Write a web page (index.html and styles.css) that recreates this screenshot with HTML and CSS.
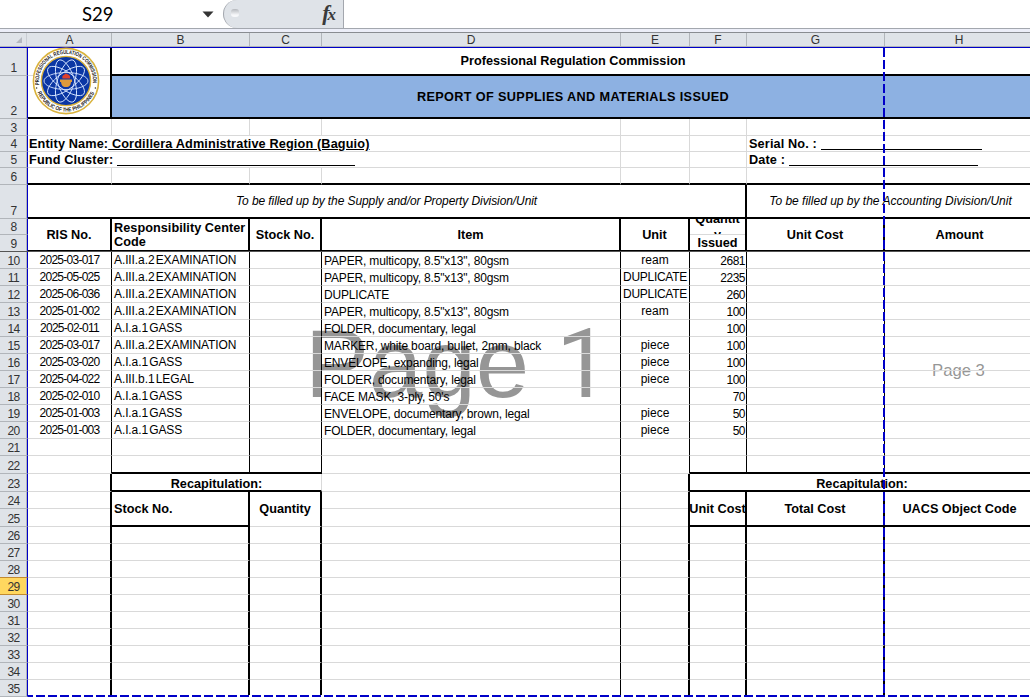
FILE: index.html
```
<!DOCTYPE html>
<html lang="en">
<head>
<meta charset="utf-8">
<title>Report of Supplies and Materials Issued</title>
<link rel="stylesheet" href="styles.css">
</head>
<body>
<div class="app">
  <div class="bar">
    <div class="namebox"><span>S29</span><svg class="caret" width="12" height="7" viewBox="0 0 12 7"><path d="M0.5 0.5h11L6 6.5z" fill="#333"/></svg></div>
    <div class="fxbox"><b class="knob"></b><span class="fx">f<small>x</small></span></div>
    <div class="formula"></div>
  </div>
  <div class="split"></div>
  <div class="row cols">
    <div class="corner"><svg width="6" height="6" viewBox="0 0 6 6"><path d="M6 0v6H0z" fill="#b4b8bf"/></svg></div>
    <div>A</div><div>B</div><div>C</div><div>D</div><div>E</div><div>F</div><div>G</div><div>H</div>
  </div>

  <div class="sheet">
    <div class="mark big">Page <span>1</span></div>
    <div class="mark small">Page 3</div>

    <div class="row top">
      <div class="nums"><div class="n h28">1</div><div class="n h43">2</div></div>
      <div class="logo tr tb">
        <div class="logoline"></div>
        <svg class="seal" width="68" height="68" viewBox="0 0 68 68">
          <defs>
            <path id="arcTop" d="M7.500 39A27 27 0 1 1 60.500 39"/>
            <path id="arcBot" d="M5 43.500A30.500 30.500 0 0 0 63 43.500"/>
          </defs>
          <circle cx="34" cy="34" r="32.6" fill="#fff" stroke="#d9b23c" stroke-width="1.6"/>
          <circle cx="34" cy="34" r="24.6" fill="#0a36a4" stroke="#d9b23c" stroke-width="1.4"/>
          <g fill="none" stroke="#d5e4ff" stroke-width="0.9">
            <ellipse cx="34" cy="34" rx="22" ry="8.5"/>
            <ellipse cx="34" cy="34" rx="22" ry="8.5" transform="rotate(36 34 34)"/>
            <ellipse cx="34" cy="34" rx="22" ry="8.5" transform="rotate(72 34 34)"/>
            <ellipse cx="34" cy="34" rx="22" ry="8.5" transform="rotate(108 34 34)"/>
            <ellipse cx="34" cy="34" rx="22" ry="8.5" transform="rotate(144 34 34)"/>
          </g>
          <path d="M30.5 31.5q-1-3 2-4 1-1.500 2.500-.5 4 1 3 4.500z" fill="#e0402c"/>
          <path d="M28 32.500h12v2.500h-1q-.5 4.500-3.500 5h-3q-3-.5-3.500-5h-1z" fill="#dd9a3c"/>
          <text class="sealtext" textLength="91" lengthAdjust="spacingAndGlyphs"><textPath href="#arcTop" startOffset="1">PROFESSIONAL REGULATION COMMISSION</textPath></text>
          <text class="sealtext" textLength="72" lengthAdjust="spacingAndGlyphs"><textPath href="#arcBot" startOffset="2">REPUBLIC OF THE PHILIPPINES</textPath></text>
          <circle cx="4.600" cy="41" r=".8" fill="#333"/><circle cx="63.400" cy="41" r=".8" fill="#333"/>
        </svg>
      </div>
      <div class="titles">
        <div class="h28 tb bold">Professional Regulation Commission</div>
        <div class="h43 tb bold report">REPORT OF SUPPLIES AND MATERIALS ISSUED</div>
      </div>
    </div>

    <div class="row grid h17"><div class="n">3</div><i></i><i></i><i></i><i></i><i></i><i></i><i></i><i></i></div>
    <div class="row grid h16"><div class="n">4</div><div class="a-d label">Entity Name:<u>&nbsp;Cordillera Administrative Region (Baguio)</u></div><i></i><i></i><div class="g-h label">Serial No. : <span class="blank serial"></span></div></div>
    <div class="row grid h16"><div class="n">5</div><div class="a-d label">Fund Cluster: <span class="blank fund"></span></div><i></i><i></i><div class="g-h label">Date : <span class="blank date"></span></div></div>
    <div class="row grid h17"><div class="n">6</div><i class="tb"></i><i class="tb"></i><i class="tb"></i><i class="tb"></i><i class="tb"></i><i class="tb"></i><i class="tb"></i><i class="tb"></i></div>
    <div class="row h34"><div class="n">7</div><div class="a-f note tr tb">To be filled up by the Supply and/or Property Division/Unit</div><div class="g-h note acct tb">To be filled up by the Accounting Division/Unit</div></div>

    <div class="row heads h33">
      <div class="nums"><div class="n h16">8</div><div class="n h17">9</div></div>
      <div class="tr">RIS No.</div>
      <div class="tr wrap">Responsibility Center Code</div>
      <div class="tr">Stock No.</div>
      <div class="tr">Item</div>
      <div class="tr">Unit</div>
      <div class="qty tr"><div class="qtop"><span>Quantit<br>y</span></div><div class="qbot">Issued</div></div>
      <div class="tr">Unit Cost</div>
      <div>Amount</div>
    </div>
    <div class="freeze"></div>

    <div class="row grid data"><div class="n">10</div><div>2025-03-017</div><div>A.III.a.2 EXAMINATION</div><div></div><div>PAPER, multicopy, 8.5"x13", 80gsm</div><div>ream</div><div>2681</div><div></div><i></i></div>
    <div class="row grid data"><div class="n">11</div><div>2025-05-025</div><div>A.III.a.2 EXAMINATION</div><div></div><div>PAPER, multicopy, 8.5"x13", 80gsm</div><div class="caps">DUPLICATE</div><div>2235</div><div></div><i></i></div>
    <div class="row grid data"><div class="n">12</div><div>2025-06-036</div><div>A.III.a.2 EXAMINATION</div><div></div><div>DUPLICATE</div><div class="caps">DUPLICATE</div><div>260</div><div></div><i></i></div>
    <div class="row grid data"><div class="n">13</div><div>2025-01-002</div><div>A.III.a.2 EXAMINATION</div><div></div><div>PAPER, multicopy, 8.5"x13", 80gsm</div><div>ream</div><div>100</div><div></div><i></i></div>
    <div class="row grid data"><div class="n">14</div><div>2025-02-011</div><div>A.I.a.1 GASS</div><div></div><div>FOLDER, documentary, legal</div><div></div><div>100</div><div></div><i></i></div>
    <div class="row grid data"><div class="n">15</div><div>2025-03-017</div><div>A.III.a.2 EXAMINATION</div><div></div><div>MARKER, white board, bullet, 2mm, black</div><div>piece</div><div>100</div><div></div><i></i></div>
    <div class="row grid data"><div class="n">16</div><div>2025-03-020</div><div>A.I.a.1 GASS</div><div></div><div>ENVELOPE, expanding, legal</div><div>piece</div><div>100</div><div></div><i></i></div>
    <div class="row grid data"><div class="n">17</div><div>2025-04-022</div><div>A.III.b.1 LEGAL</div><div></div><div>FOLDER, documentary, legal</div><div>piece</div><div>100</div><div></div><i></i></div>
    <div class="row grid data"><div class="n">18</div><div>2025-02-010</div><div>A.I.a.1 GASS</div><div></div><div>FACE MASK, 3-ply, 50's</div><div></div><div>70</div><div></div><i></i></div>
    <div class="row grid data"><div class="n">19</div><div>2025-01-003</div><div>A.I.a.1 GASS</div><div></div><div>ENVELOPE, documentary, brown, legal</div><div>piece</div><div>50</div><div></div><i></i></div>
    <div class="row grid data"><div class="n">20</div><div>2025-01-003</div><div>A.I.a.1 GASS</div><div></div><div>FOLDER, documentary, legal</div><div>piece</div><div>50</div><div></div><i></i></div>
    <div class="row grid data"><div class="n">21</div><div></div><div></div><div></div><div></div><div></div><div></div><div></div><i></i></div>
    <div class="row grid data h18"><div class="n">22</div><div></div><div class="tb"></div><div class="tb"></div><div></div><div></div><div class="tb"></div><div class="tb"></div><i class="tb"></i></div>

    <div class="row grid h18"><div class="n">23</div><i class="tr"></i><div class="b-c recap tb">Recapitulation:</div><i class="kr"></i><i class="tr"></i><div class="f-h recap tb">Recapitulation:</div></div>

    <div class="row recaphead h35">
      <div class="nums"><div class="n h17">24</div><div class="n h18">25</div></div>
      <div class="pair tr"><i></i><i></i></div>
      <div class="tr tb left">Stock No.</div>
      <div class="tr gb">Quantity</div>
      <div class="pair kr"><i></i><i></i></div>
      <div class="pair tr"><i></i><i></i></div>
      <div class="tr tb clip"><span>Unit Cost</span></div>
      <div class="tr tb">Total Cost</div>
      <div class="tb">UACS Object Code</div>
    </div>

    <div class="row grid tail"><div class="n">26</div><i></i><i></i><i></i><i></i><i></i><i></i><i></i><i></i></div>
    <div class="row grid tail"><div class="n">27</div><i></i><i></i><i></i><i></i><i></i><i></i><i></i><i></i></div>
    <div class="row grid tail"><div class="n over">28</div><i></i><i></i><i></i><i></i><i></i><i></i><i></i><i></i></div>
    <div class="row grid tail"><div class="n active">29</div><i></i><i></i><i></i><i></i><i></i><i></i><i></i><i></i></div>
    <div class="row grid tail"><div class="n">30</div><i></i><i></i><i></i><i></i><i></i><i></i><i></i><i></i></div>
    <div class="row grid tail"><div class="n">31</div><i></i><i></i><i></i><i></i><i></i><i></i><i></i><i></i></div>
    <div class="row grid tail"><div class="n">32</div><i></i><i></i><i></i><i></i><i></i><i></i><i></i><i></i></div>
    <div class="row grid tail"><div class="n">33</div><i></i><i></i><i></i><i></i><i></i><i></i><i></i><i></i></div>
    <div class="row grid tail"><div class="n">34</div><i></i><i></i><i></i><i></i><i></i><i></i><i></i><i></i></div>
    <div class="row grid tail"><div class="n">35</div><i></i><i></i><i></i><i></i><i></i><i></i><i></i><i></i></div>

    <div class="break vertical"></div>
    <div class="break horizontal"></div>
  </div>
</div>
</body>
</html>
```
FILE: styles.css
```
* { box-sizing: border-box; }
body { margin: 0; background: #fff; font-family: "Liberation Sans", Arial, sans-serif; font-size: 12px; color: #000; }
i { font-style: normal; }
.app { width: 1030px; height: 697px; overflow: hidden; }

/* formula bar */
.bar { height: 29px; display: flex; border-bottom: 1px solid #a3a7ae; }
.namebox { width: 223px; display: flex; align-items: center; padding-left: 82px; font: 18.5px/28px Lato, sans-serif; }
.namebox .caret { margin-left: auto; margin-right: 9px; }
.fxbox { width: 121px; height: 28px; background: #dfe3e8; border: 1px solid #a3a7ae; border-width: 0 1px 0 1px; border-radius: 14px 0 0 14px; display: flex; align-items: center; padding: 0 7px 0 7px; justify-content: space-between; }
.knob { width: 8px; height: 8px; border-radius: 3px; background: linear-gradient(#b5b8bd, #f7f8fa 75%); margin-top: -3px; }
.fx { font: italic bold 22px/24px "Liberation Serif", serif; color: #3a3a3a; }
.fx small { font-size: 17px; margin-left: -2px; }
.split { height: 4px; background: #eceef8; border-bottom: 1px solid #898c91; }

.row { display: grid; grid-template-columns: 28px 84px 138px 72px 299px 69px 57px 138px 149px; grid-template-rows: 100%; width: 1034px; height: 17px; }
.cols { height: 14px; background: #dfe3e8; border-bottom: 1px solid #b1b5ba; font-size: 12px; line-height: 14px; text-align: center; color: #333; }
.cols > div { border-right: 1px solid #b1b5ba; }
.cols .corner { border-right-color: #c9cdd3; width: 27px; display: flex; justify-content: flex-end; align-items: center; padding-right: 4px; }

.sheet { position: relative; border-top: 1px solid #0000c8; width: 1034px; }
.h16 { height: 16px; } .h17 { height: 17px; } .h18 { height: 18px; } .h28 { height: 28px; }
.h33 { height: 33px; } .h34 { height: 34px; } .h35 { height: 35px; } .h43 { height: 43px; }
.top { height: 71px; }

.n { display: flex; align-items: flex-end; justify-content: center; background: #dfe3e8; border-right: 1px solid #0000c8; border-bottom: 1px solid #b1b5ba; color: #333; line-height: 13px; letter-spacing: -.6px; box-shadow: inset -1px 0 #b1b5ba; }
.n.over { border-bottom-color: #c28a30; }
.n.active { background: #ffd75f; border-bottom-color: #c28a30; }

/* cell lines */
.grid > i, .grid > .a-d, .grid > .g-h { border-right: 1px solid #d9d9d9; border-bottom: 1px solid #d9d9d9; }
.row .tr { border-right: 2px solid #000; }
.row .tb { border-bottom: 2px solid #000; }
.row .kr { border-right: 1px solid #000; }
.row .gb { border-bottom: 1px solid #d9d9d9; }
.a-d { grid-column: 2 / 6; }
.a-f { grid-column: 2 / 8; }
.b-c { grid-column: 3 / 5; border-right: 1px solid #d9d9d9; }
.f-h { grid-column: 7 / 10; }
.g-h { grid-column: 8 / 10; }

.logo { position: relative; }
.logoline { height: 28px; border-bottom: 1px solid #d9d9d9; }
.seal { position: absolute; left: 4px; top: -1px; }
.sealtext { font: bold 5.6px "Liberation Sans", sans-serif; fill: #222; }
.titles { grid-column: 3 / 10; text-align: center; }
.bold, .label, .recap, .heads, .recaphead { font-weight: bold; font-size: 12.7px; }
.titles .h28 { line-height: 26px; }
.report { background: #8db1e2; line-height: 42px; letter-spacing: .36px; }
.label { padding-left: 1px; line-height: 16px; white-space: pre; letter-spacing: .14px; }
.g-h.label { padding-left: 2px; }
.blank { display: inline-block; height: 14px; border-bottom: 1px solid #000; vertical-align: top; }
.fund { width: 238px; } .serial { width: 161px; } .date { width: 189px; }
.note { font-style: italic; text-align: center; line-height: 33px; letter-spacing: -.09px; }
.note.acct { letter-spacing: 0; }
.nums .n { width: 28px; }
.heads .n, .recaphead .n { font-weight: normal; font-size: 12px; }

.heads > div { text-align: center; line-height: 33px; border-bottom: 2px solid #000; }
.heads > .nums { border: 0; }
.heads .n, .recaphead .n { line-height: 13px; }
.heads > .wrap { text-align: left; line-height: 14px; padding: 2px 0 0 2px; letter-spacing: .04px; }
.heads > .qty { line-height: 16px; }
.qtop { height: 16px; overflow: hidden; border-bottom: 1px solid #d9d9d9; display: flex; align-items: center; justify-content: center; }
.freeze { height: 1px; margin-top: -1px; background: #555; position: relative; }

.data > div { line-height: 17px; border-right: 1px solid #000; border-bottom: 1px solid #d9d9d9; white-space: nowrap; }
.data > div.n { line-height: 13px; border-right-color: #0000c8; border-bottom-color: #b1b5ba; }
.data > :nth-child(2) { text-align: center; letter-spacing: -.75px; border-right-color: #000; }
.data > :nth-child(3) { padding-left: 2px; letter-spacing: -.1px; word-spacing: -2px; }
.data > :nth-child(5) { padding: 1px 0 0 2px; letter-spacing: -.16px; }
.data > :nth-child(6) { text-align: center; }
.data > .caps { letter-spacing: -.3px; }
.data > :nth-child(7) { padding: 1px 1px 0 0; text-align: right; letter-spacing: -.5px; }

.recap { text-align: center; line-height: 20px; }
.recaphead > div { text-align: center; line-height: 35px; }
.recaphead > .left { text-align: left; padding-left: 2px; }
.clip { overflow: hidden; white-space: nowrap; display: flex; justify-content: center; }
.pair i { display: block; height: 17px; border-bottom: 1px solid #d9d9d9; }
.pair i + i { height: 18px; }
.tail > i:nth-child(2), .tail > i:nth-child(3), .tail > i:nth-child(4), .tail > i:nth-child(6), .tail > i:nth-child(7), .tail > i:nth-child(8) { border-right: 2px solid #000; }
.tail > i:nth-child(5) { border-right: 1px solid #000; }

/* page view overlays */
.mark { position: absolute; z-index: -1; color: #969696; line-height: 96px; white-space: nowrap; }
.big { left: 305px; top: 268px; font-size: 96px; }
.big span { font-family: Roboto, sans-serif; }
.small { left: 932px; top: 314px; font-size: 16.7px; line-height: 17px; }
.break { position: absolute; }
.vertical { left: 883px; top: 0; width: 2px; height: 649px; background: repeating-linear-gradient(#0000c8 0 9px, transparent 9px 12px); }
.horizontal { left: 28px; top: 647px; width: 1006px; height: 2px; background: repeating-linear-gradient(90deg, #0000c8 0 5px, #fff 5px 8px, #0000c8 8px 12px); }
```
